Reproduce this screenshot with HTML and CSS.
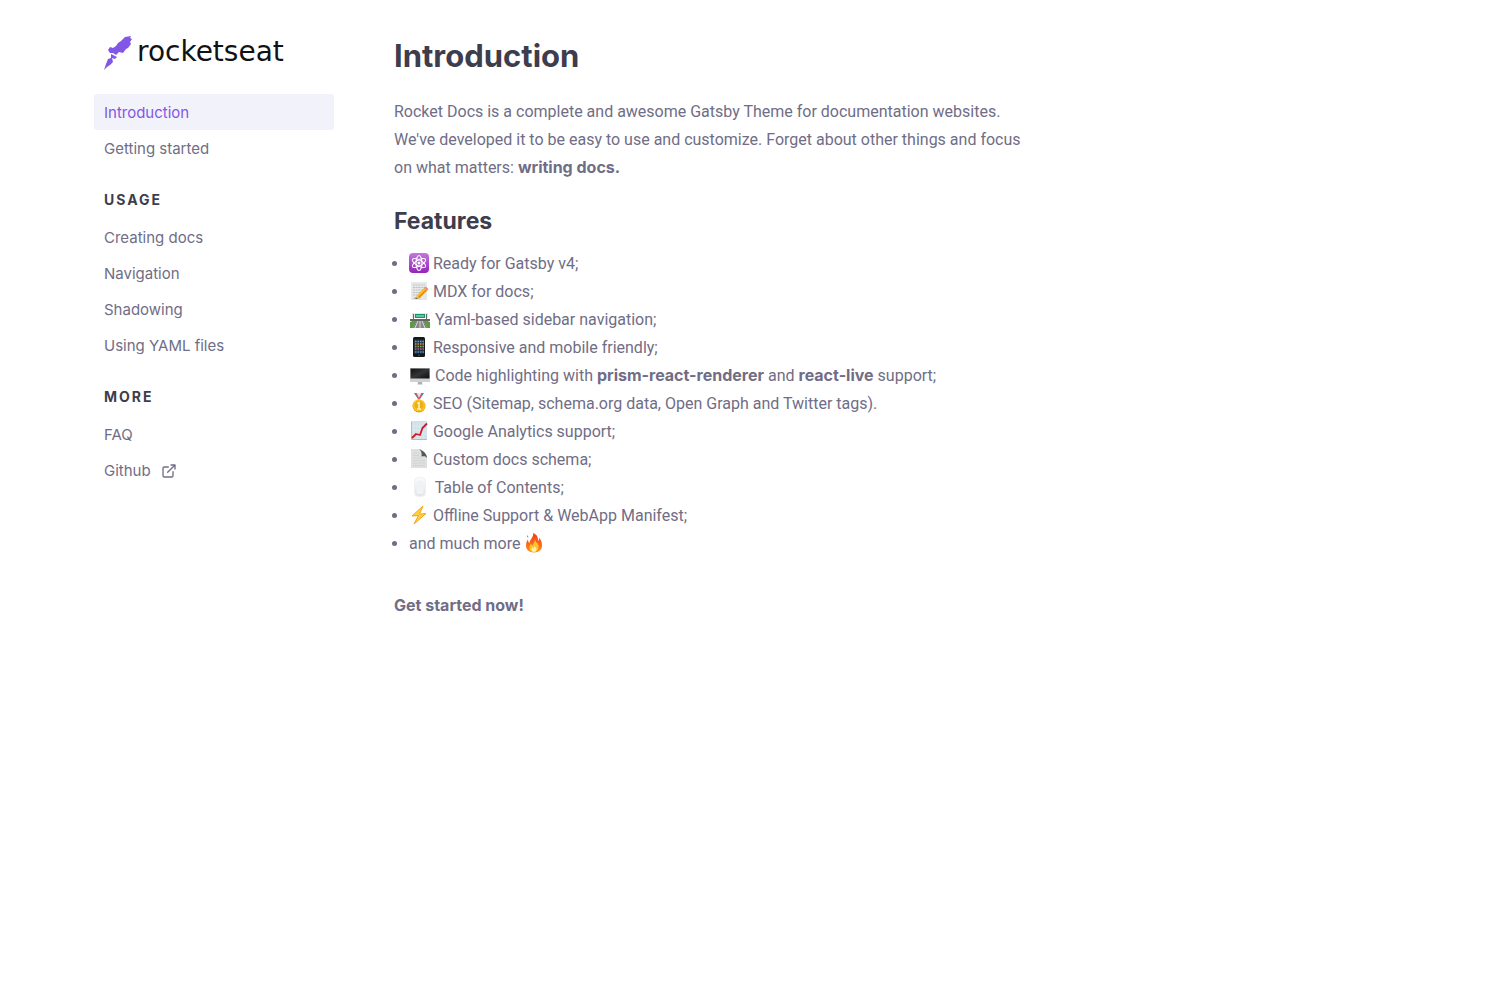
FILE: index.html
```html
<!DOCTYPE html>
<html lang="en">
<head>
<meta charset="utf-8">
<meta name="viewport" content="width=device-width, initial-scale=1">
<title>Introduction | Rocket Docs</title>
<link rel="stylesheet" href="styles.css">
</head>
<body>
<div class="layout">
  <aside class="sidebar">
    <a class="logo" href="#">
      <svg class="logo-mark" viewBox="0 0 28 34" aria-hidden="true"><path fill="#8257e5" d="M21 1L27 0L26 2L28 3L26 6L27 8L24 12L22 13L19 17L15 16L12 19L9 17L6 17L4 14L6 11L9 12L12 10L14 7L17 5L19 3ZM7 18L9 19L13 21L11 23L8 22L9 26L6 29L3 31L0 34L2 28L4 23L7 22Z"/></svg>
      <span class="logo-name">rocketseat</span>
    </a>
    <nav>
      <ul class="nav-list">
        <li><a class="nav-link active" href="#">Introduction</a></li>
        <li><a class="nav-link" href="#">Getting started</a></li>
      </ul>
      <h3 class="nav-title">Usage</h3>
      <ul class="nav-list">
        <li><a class="nav-link" href="#">Creating docs</a></li>
        <li><a class="nav-link" href="#">Navigation</a></li>
        <li><a class="nav-link" href="#">Shadowing</a></li>
        <li><a class="nav-link" href="#">Using YAML files</a></li>
      </ul>
      <h3 class="nav-title">More</h3>
      <ul class="nav-list">
        <li><a class="nav-link" href="#">FAQ</a></li>
        <li><a class="nav-link" href="#">Github
          <svg class="external" viewBox="0 0 24 24" aria-hidden="true"><path d="M18 13v6a2 2 0 0 1-2 2H5a2 2 0 0 1-2-2V8a2 2 0 0 1 2-2h6M15 3h6v6M10 14L21 3"/></svg></a></li>
      </ul>
    </nav>
  </aside>
  <main class="content">
    <h1>Introduction</h1>
    <p>Rocket Docs is a complete and awesome Gatsby Theme for documentation websites. We've developed it to be easy to use and customize. Forget about other things and focus on what matters: <strong>writing docs.</strong></p>
    <h2>Features</h2>
    <ul class="features">
      <li><svg class="emoji" viewBox="0 0 20 20" aria-hidden="true"><defs><linearGradient id="atom" x2="0" y2="1"><stop stop-color="#c477df"/><stop offset="1" stop-color="#9424b8"/></linearGradient></defs><rect width="20" height="20" rx="4" fill="url(#atom)"/><g fill="none" stroke="#fff" stroke-width="1.1"><ellipse cx="10" cy="10" rx="3" ry="7.5"/><ellipse cx="10" cy="10" rx="3" ry="7.5" transform="rotate(60 10 10)"/><ellipse cx="10" cy="10" rx="3" ry="7.5" transform="rotate(120 10 10)"/></g><circle cx="10" cy="10" r="1.5" fill="#fff"/></svg> Ready for Gatsby v4;</li>
      <li><svg class="emoji" viewBox="0 0 20 20" aria-hidden="true"><path fill="#e7e8e8" d="M2 1h16v18H2z"/><path stroke="#c0c2c5" stroke-dasharray="2 .6" d="M4 4h12M4 6.500h12M4 9h11M4 11.500h8M4 14h5"/><path fill="#8b8d90" d="M4 17l5-1 3 1-5 1z"/><path fill="#f9bd2b" d="M15.500 6.500l3 2.500-8 8-3.500 1 .8-3.600z"/><path fill="#e78b19" d="M18.500 9l-8 8-1.300-1.200L17.500 8z"/><path fill="#ef8b83" d="M15 7l1.600-1.400L19.500 8 18 9.600z"/><path fill="#424448" d="M7.300 16.700L7 18l1.400-.4z"/></svg> MDX for docs;</li>
      <li><svg class="emoji wide" viewBox="0 0 22 20" aria-hidden="true"><path fill="#e3e7e7" d="M3 4h16v5H3z"/><path fill="#5c9c3c" d="M1 13l5-2h10l5 2v6H1z"/><path fill="#858885" d="M8 11h6l5 8H3z"/><path stroke="#eee" stroke-width=".8" d="M9 12L6 19M13 12l3 7M11 11v8"/><path fill="#626765" d="M1 10h20v2H1zM4 5h1v6H4zM17 5h1v6h-1z"/><path fill="#169668" d="M6 5h10v4H6z"/><path stroke="#bce6d3" d="M7 7h8"/></svg> Yaml-based sidebar navigation;</li>
      <li><svg class="emoji" viewBox="0 0 20 20" aria-hidden="true"><rect x="4" width="12" height="20" rx="1.500" fill="#151719"/><path fill="#28333c" d="M5 2.500h10v14H5z"/><g stroke-width="1.500" stroke-dasharray="1.500 1"><path stroke="#5da6d8" d="M6 4.500h9"/><path stroke="#e58b4e" d="M6 7h9"/><path stroke="#70b95a" d="M6 9.500h9"/><path stroke="#b65ba6" d="M6 12h9"/><path stroke="#508fd0" d="M6 15h9"/></g><circle cx="10" cy="18.200" r=".8" fill="#555"/></svg> Responsive and mobile friendly;</li>
      <li><svg class="emoji wide" viewBox="0 0 22 20" aria-hidden="true"><defs><linearGradient id="screen" x2="1" y2="1"><stop stop-color="#111"/><stop offset=".5" stop-color="#333537"/><stop offset="1" stop-color="#0c0c0d"/></linearGradient></defs><path fill="#cfd1d3" d="M1 3h20v14H1z"/><path fill="url(#screen)" d="M1.500 3.500h19v10h-19z"/><path fill="#aeb1b4" d="M9 17h4l.5 2.500h-5z"/></svg> Code highlighting with <strong>prism-react-renderer</strong> and <strong>react-live</strong> support;</li>
      <li><svg class="emoji" viewBox="0 0 20 20" aria-hidden="true"><path fill="#4c78b5" d="M5 0h3l2 6H9zM12 0h3l-4 6H9z"/><path fill="#e4e7ec" d="M7 0h6l-3 6z"/><path fill="none" stroke="#e4545a" stroke-width="1.200" d="M7 0l3 6 3-6"/><circle cx="10" cy="13" r="6.500" fill="#e49b08"/><circle cx="10" cy="12.500" r="6" fill="#ffc91f"/><circle cx="10" cy="12.500" r="4.700" fill="#efad16"/><path stroke="#fff3bd" stroke-width="1.500" fill="none" d="M8.300 10.500L10 9.500v6M8 16h4"/></svg> SEO (Sitemap, schema.org data, Open Graph and Twitter tags).</li>
      <li><svg class="emoji" viewBox="0 0 20 20" aria-hidden="true"><path fill="#d1e1e9" d="M2 0h16v19H2z"/><path stroke="#e4edf1" stroke-width=".6" d="M5 1v18M8 1v18M11 1v18M14 1v18M2 5h16M2 9h16M2 13h16"/><path stroke="#b5bdc2" fill="none" d="M2.500 1v17.500H18"/><path stroke="#cf1924" stroke-width="1.800" stroke-linejoin="round" fill="none" d="M3 17l4-4 4 1 2.500-7L18 2.500"/></svg> Google Analytics support;</li>
      <li><svg class="emoji" viewBox="0 0 20 20" aria-hidden="true"><path fill="#dedfdf" d="M2 0h9l7 7v12H2z"/><path stroke="#d0d1d2" stroke-width=".8" d="M4 4h6M4 6.500h6M4 9h8M4 11.500h12M4 14h12M4 16.500h12"/><path fill="#55585a" d="M10 0c3 1 8 4 8 9-1-2-3-2-5.500-1.500C13 4 12.500 2 10 0z"/></svg> Custom docs schema;</li>
      <li><svg class="emoji wide" viewBox="0 0 22 20" aria-hidden="true"><defs><linearGradient id="capsule" x2="0" y2="1"><stop stop-color="#fafbfc"/><stop offset="1" stop-color="#e2e6e8"/></linearGradient></defs><rect x="5.500" y=".5" width="11" height="19" rx="4" fill="url(#capsule)" stroke="#eef0f2"/><rect x="7.500" y="4" width="7" height="13" rx="3" fill="#f0f2f4"/></svg> Table of Contents;</li>
      <li><svg class="emoji" viewBox="0 0 20 20" aria-hidden="true"><path fill="#ffd43a" stroke="#f5a11c" stroke-linejoin="round" d="M14 1L3 11l6.500-.5L5 19 17 8.500l-6.500.7z"/></svg> Offline Support &amp; WebApp Manifest;</li>
      <li>and much more <svg class="emoji" viewBox="0 0 20 20" aria-hidden="true"><defs><linearGradient id="flame" x2="0" y2="1"><stop stop-color="#f13b20"/><stop offset="1" stop-color="#ff8b18"/></linearGradient></defs><path fill="url(#flame)" d="M9 0c5 2 5 5 5 8 1-1 1.500-2 1-3.500 2 2 3 5 3 8 0 4-3 7-8 7s-8-3-8-7c0-3 1-5 2-6 0 2 .5 3 1.500 3.500C6 6 10 4 9 0zM3.500 2l1 2.500-1.500-.7z"/><path fill="#ffc229" d="M11 6c.5 4 3 3.500 3.500 7 .4 3-1.500 6-4.500 6s-5-2-4.500-5c.3-2 1-2 1.500-3.500.7 1 .8 1.500 1 2.500C9 11 11 9 11 6z"/><path fill="#fff0a3" d="M10.500 12c0 2 2 2.500 2 4.500 0 1.500-1 2.500-2.500 2.500S7.500 18 7.500 16.500c0-1.500 1-1.500 1.300-2.500.5.500.7 1 .8 1.500.6-1 .9-2 .9-3.500z"/></svg></li>
    </ul>
    <p><a class="start" href="#">Get started now!</a></p>
  </main>
</div>
</body>
</html>
```

FILE: styles.css
```css
* { box-sizing: border-box; }
body {
  margin: 0;
  background: #fff;
  color: #706d86;
  font: 16px/28px Inter, "Liberation Sans", sans-serif;
}
a { color: inherit; text-decoration: none; }
ul { margin: 0; padding: 0; }

.layout {
  display: flex;
  gap: 60px;
  padding: 36px 94px;
}
.sidebar { flex: 0 0 240px; }
.logo {
  display: flex;
  align-items: flex-start;
  gap: 5px;
  padding-left: 10px;
  margin-bottom: 24px;
}
.logo-mark { width: 28px; height: 34px; }
.logo-name {
  color: #121214;
  font: 28px/32px "DejaVu Sans", sans-serif;
}

.nav-list { list-style: none; }
.nav-link {
  display: flex;
  align-items: center;
  gap: 10px;
  height: 36px;
  padding: 2px 10px 0;
  border-radius: 3px;
  font-size: 15px;
}
.nav-link.active { background: #f2f2fa; color: #8257e5; }
.nav-title {
  margin: 24px 0 9px;
  padding-left: 10px;
  color: #3d3d4d;
  font-size: 14px;
  line-height: 20px;
  letter-spacing: 2px;
  text-transform: uppercase;
}
.external {
  width: 16px;
  height: 16px;
  fill: none;
  stroke: currentColor;
  stroke-width: 2;
  stroke-linecap: round;
  stroke-linejoin: round;
}

.content {
  flex: 0 1 646px;
  font-family: Roboto, "Liberation Sans", sans-serif;
}
h1, h2 { margin: 0; color: #3d3d4d; }
h1, h2, strong, .start { font-family: Inter, "Liberation Sans", sans-serif; font-weight: 700; }
strong, .start { line-height: 20px; }
h1 { font-size: 31px; line-height: 40px; margin-bottom: 22px; }
h2 { font-size: 23px; line-height: 30px; margin-bottom: 14px; }
p { margin: 0 0 24px; }
.features { padding-left: 15px; margin-bottom: 34px; }
.emoji {
  width: 20px;
  height: 20px;
  vertical-align: -4px;
}
.emoji.wide { width: 22px; }
```
